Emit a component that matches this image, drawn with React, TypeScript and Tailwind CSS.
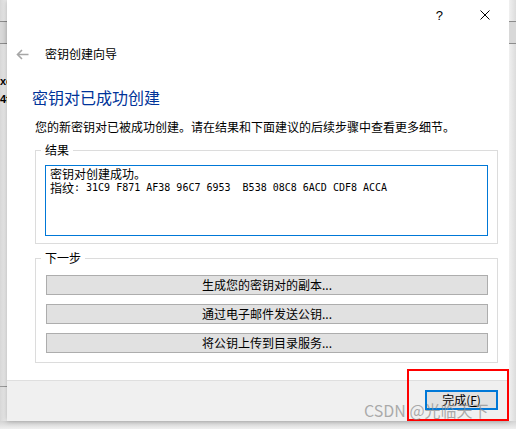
import { ReactNode } from "react";

const fingerprint = ": 31C9 F871 AF38 96C7 6953  B538 08C8 6ACD CDF8 ACCA";

const nextSteps = [
  "生成您的密钥对的副本...",
  "通过电子邮件发送公钥...",
  "将公钥上传到目录服务...",
];

// window chrome peeking out behind the dialog
const SideStrip = ({ left }: { left?: boolean }) => (
  <div
    className={`flex w-[7px] flex-col overflow-hidden ${
      left
        ? "bg-gradient-to-r from-[#d6d6d6] to-[#f3f3f3]"
        : "bg-gradient-to-r from-[#f0f0f0] to-[#dcdcdc]"
    }`}
  >
    <div className="h-[21px] shrink-0" />
    <div className="h-[23px] shrink-0 border-y border-[#8c8c8c] bg-[#d8d8d8]" />
    {left && (
      <>
        <div className="mt-[30px] whitespace-nowrap font-['Liberation_Sans',sans-serif] text-[11px] font-bold leading-[14px]">
          xc
        </div>
        <div className="mt-[4px] whitespace-nowrap font-['Liberation_Sans',sans-serif] text-[11px] font-bold leading-[14px]">
          4f
        </div>
        <div className="mt-[280px] h-[1px] shrink-0 bg-[#9a9a9a]" />
      </>
    )}
  </div>
);

const GroupBox = ({
  title,
  className,
  children,
}: {
  title: string;
  className?: string;
  children: ReactNode;
}) => (
  <fieldset
    className={`ml-[28px] mr-[11px] border border-[#dcdcdc] px-[9px] ${className ?? ""}`}
  >
    <legend className="ml-[-4px] px-[4px] leading-[16px]">{title}</legend>
    {children}
  </fieldset>
);

const App = () => {
  return (
    <div className="relative h-[429px] w-[516px] overflow-hidden bg-[#ececec] font-['Noto_Sans_CJK_SC',sans-serif] text-[12px] text-black">
      <div className="flex h-[421px]">
        <SideStrip left />

        <div className="flex w-[502px] flex-col bg-white shadow-[0_0_5px_rgba(0,0,0,0.3)]">
          {/* caption buttons */}
          <div className="flex h-[30px] shrink-0 items-center justify-end">
            <span className="mr-[37px] font-['Liberation_Sans',sans-serif] text-[13px] leading-none">
              ?
            </span>
            <svg
              width="10"
              height="10"
              viewBox="0 0 10 10"
              className="mr-[19px]"
            >
              <path d="M0.5 0.5L9.5 9.5M9.5 0.5L0.5 9.5" stroke="#000" strokeWidth="1" />
            </svg>
          </div>

          {/* wizard header */}
          <div className="flex h-[48px] shrink-0 items-center">
            <svg
              width="13"
              height="11"
              viewBox="0 0 13 11"
              className="ml-[9px]"
            >
              <path
                d="M12.5 5.5H1.5M6 1L1.5 5.5L6 10"
                fill="none"
                stroke="#a6a6a6"
                strokeWidth="1.6"
              />
            </svg>
            <span className="ml-[16px] leading-[16px]">密钥创建向导</span>
          </div>

          <h1 className="ml-[25px] mt-[9px] text-[16px] leading-[20px] text-[#003399]">
            密钥对已成功创建
          </h1>
          <p className="ml-[28px] mt-[12px] leading-[16px]">
            您的新密钥对已被成功创建。请在结果和下面建议的后续步骤中查看更多细节。
          </p>

          <GroupBox title="结果" className="mt-[7px] pb-[7px] pt-[7px]">
            <div className="h-[71px] border border-[#0078d7] bg-white pl-[4px] pt-[1px] leading-[14px]">
              <div>密钥对创建成功。</div>
              <div className="flex items-center whitespace-pre">
                <span>指纹</span>
                <span className="font-['DejaVu_Sans_Mono',monospace] text-[10px]">
                  {fingerprint}
                </span>
              </div>
            </div>
          </GroupBox>

          <GroupBox title="下一步" className="mt-[6px] pb-[9px] pt-[9px]">
            <div className="flex flex-col gap-[9px] pl-[1px]">
              {nextSteps.map((label) => (
                <button
                  key={label}
                  type="button"
                  className="h-[20px] border border-[#adadad] bg-[#e1e1e1] text-center leading-[18px]"
                >
                  {label}
                </button>
              ))}
            </div>
          </GroupBox>

          <div className="flex-1" />

          {/* footer */}
          <div className="flex h-[41px] shrink-0 justify-end border-t border-[#dfdfdf] bg-[#f0f0f0] pt-[9px]">
            <button
              type="button"
              className="mr-[11px] h-[20px] w-[73px] border-2 border-[#0078d7] bg-[#e1e1e1] leading-[16px]"
            >
              完成(<span className="underline">F</span>)
            </button>
          </div>
        </div>

        <SideStrip />
      </div>
      <div className="h-[8px] bg-gradient-to-b from-[#d4d4d4] to-[#efefef]" />

      {/* annotation box around the finish button */}
      <div className="absolute left-[407px] top-[369px] h-[52px] w-[102px] border-2 border-[#ff0000]" />

      {/* watermark */}
      <div className="pointer-events-none absolute left-[364px] top-[399px] whitespace-nowrap text-[16px] leading-[22px] text-[#8a8a8a]/70">
        CSDN @光临天下
      </div>
    </div>
  );
};

export default App;
